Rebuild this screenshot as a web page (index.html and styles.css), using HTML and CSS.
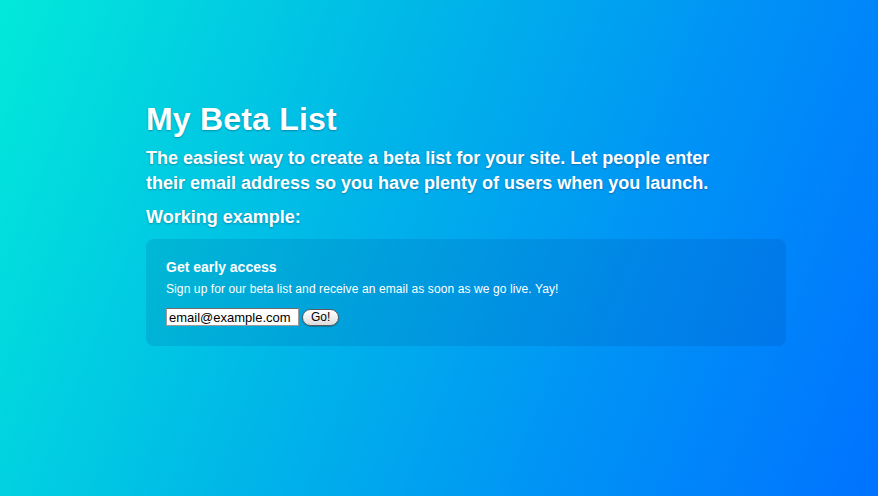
FILE: index.html
```html
<!DOCTYPE html>
<html lang="en">
<head>
<meta charset="utf-8">
<title>My Beta List</title>
<link rel="stylesheet" href="styles.css">
</head>
<body>
<main class="page">
  <h1 class="title">My Beta List</h1>
  <p class="lead">The easiest way to create a beta list for your site. Let people enter their email address so you have plenty of users when you launch.</p>
  <h2 class="example-label">Working example:</h2>
  <section class="signup">
    <h3 class="signup-title">Get early access</h3>
    <p class="signup-text">Sign up for our beta list and receive an email as soon as we go live. Yay!</p>
    <form class="signup-form" onsubmit="return false;">
      <input class="signup-input" type="text" value="email@example.com">
      <button class="signup-button" type="submit">Go!</button>
    </form>
  </section>
</main>
</body>
</html>
```

FILE: styles.css
```css
html, body {
  margin: 0;
  height: 100%;
}

body {
  font-family: "Liberation Sans", Arial, Helvetica, sans-serif;
  color: #fff;
  background: linear-gradient(112deg, #02e9da 0%, #00b6e8 40%, #0092f6 70%, #0072ff 100%);
  overflow: hidden;
}

.page {
  width: 640px;
  padding: 102px 0 0 146px;
}

.title {
  margin: 0;
  font-size: 32px;
  line-height: 34px;
  font-weight: bold;
  letter-spacing: 0.2px;
  text-shadow: 0 1px 2px rgba(0, 40, 80, 0.35);
}

.lead {
  margin: 10px 0 0;
  width: 580px;
  font-size: 18px;
  line-height: 25px;
  font-weight: bold;
  text-shadow: 0 1px 2px rgba(0, 40, 80, 0.35);
}

.example-label {
  margin: 9px 0 0;
  font-size: 18px;
  line-height: 25px;
  font-weight: bold;
  text-shadow: 0 1px 2px rgba(0, 40, 80, 0.35);
}

.signup {
  margin-top: 9px;
  width: 600px;
  padding: 20px 20px 20px;
  border-radius: 8px;
  background: rgba(0, 40, 120, 0.12);
}

.signup-title {
  margin: 0;
  font-size: 14px;
  line-height: 17px;
  font-weight: bold;
}

.signup-text {
  margin: 6px 0 0;
  font-size: 12px;
  line-height: 15px;
  letter-spacing: 0.1px;
}

.signup-form {
  display: flex;
  align-items: center;
  gap: 3px;
  margin-top: 11px;
}

.signup-input {
  box-sizing: border-box;
  width: 133px;
  height: 18px;
  margin: 0;
  padding: 0 2px;
  border: 1px solid #9a9a9a;
  border-top-color: #6e6e6e;
  background: #fff;
  font-family: "Liberation Sans", Arial, sans-serif;
  font-size: 13px;
  color: #000;
}

.signup-button {
  box-sizing: border-box;
  height: 17px;
  padding: 0 8px;
  border: 1px solid #5a5a5a;
  border-radius: 9px;
  background: linear-gradient(#ffffff, #f0f0f0 50%, #dcdcdc);
  box-shadow: 0 1px 1px rgba(0, 0, 0, 0.25);
  font-family: "Liberation Sans", Arial, sans-serif;
  font-size: 12px;
  line-height: 15px;
  color: #000;
}
```
